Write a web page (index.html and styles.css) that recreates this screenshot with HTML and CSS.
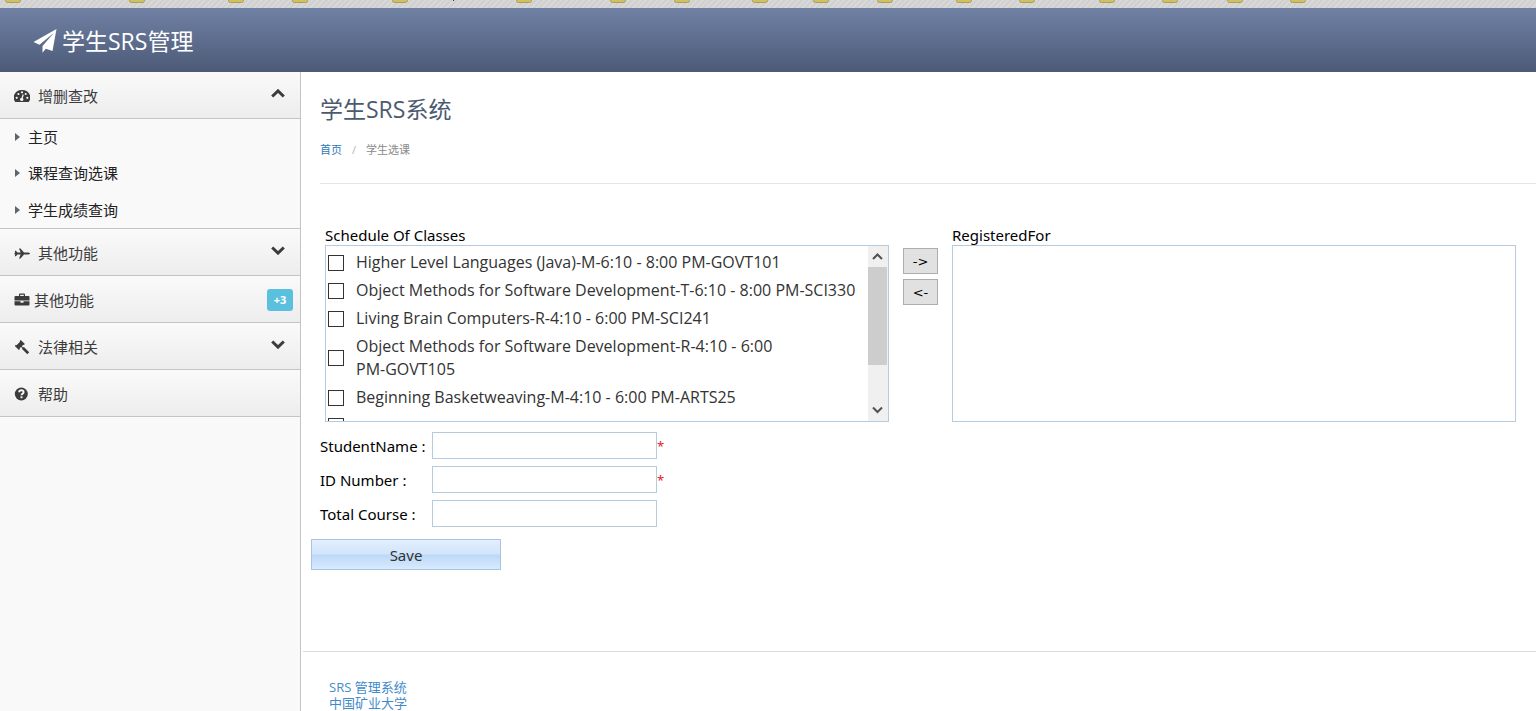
FILE: index.html
```html
<!DOCTYPE html>
<html lang="zh-CN">
<head>
<meta charset="utf-8">
<title>学生SRS管理</title>
<link rel="stylesheet" href="styles.css">
</head>
<body>
<div class="bookmarks" aria-hidden="true">
  <svg class="folders" width="1536" height="8"><g fill="#cfc068" stroke="#ad9f4c"><rect x="5.500" y="-9.500" width="15" height="12" rx="2"/><rect x="129.500" y="-9.500" width="15" height="12" rx="2"/><rect x="228.500" y="-9.500" width="15" height="12" rx="2"/><rect x="292.500" y="-9.500" width="15" height="12" rx="2"/><rect x="392.500" y="-9.500" width="15" height="12" rx="2"/><rect x="516.500" y="-9.500" width="15" height="12" rx="2"/><rect x="610.500" y="-9.500" width="15" height="12" rx="2"/><rect x="674.500" y="-9.500" width="15" height="12" rx="2"/><rect x="752.500" y="-9.500" width="15" height="12" rx="2"/><rect x="813.500" y="-9.500" width="15" height="12" rx="2"/><rect x="877.500" y="-9.500" width="15" height="12" rx="2"/><rect x="956.500" y="-9.500" width="15" height="12" rx="2"/><rect x="1019.500" y="-9.500" width="15" height="12" rx="2"/><rect x="1099.500" y="-9.500" width="15" height="12" rx="2"/><rect x="1162.500" y="-9.500" width="15" height="12" rx="2"/><rect x="1227.500" y="-9.500" width="15" height="12" rx="2"/><rect x="1290.500" y="-9.500" width="15" height="12" rx="2"/></g><rect x="453" y="0" width="1" height="1" fill="#333"/></svg>
</div>
<header class="topbar">
  <svg class="plane" width="24" height="24" viewBox="0 0 24 24" fill="#fff"><path d="M23.500 0 .5 13 6.500 15.800 21 3.800 9.500 17V23.800L12.800 19.700 19.500 22z"/></svg>
  <span class="brand">学生SRS管理</span>
</header>
<div class="layout">
  <nav class="sidebar">
    <a class="item" href="#manage">
      <svg class="icon" width="16" height="16" viewBox="0 0 16 16"><path fill="#3c3c3c" d="M8 2a8 7.500 0 0 0-6.700 12h13.400A8 7.500 0 0 0 8 2z"/><g fill="#f6f6f6"><circle cx="2.700" cy="9.800" r="1.100"/><circle cx="4.400" cy="6" r="1.100"/><circle cx="8" cy="4.300" r="1.100"/><circle cx="11.700" cy="6" r="1.100"/><circle cx="13.300" cy="9.800" r="1.100"/><circle cx="7.700" cy="11.400" r="1.700"/></g><path d="M7.900 11 9.200 6.500" stroke="#f6f6f6" stroke-width="1.200"/></svg>
      <span>增删查改</span>
      <svg class="chevron" width="14" height="9" viewBox="0 0 14 9"><path d="M1.200 7.500 7 1.900 12.800 7.500"/></svg>
    </a>
    <ul class="submenu">
      <li><a href="#home">主页</a></li>
      <li><a href="#courses">课程查询选课</a></li>
      <li><a href="#scores">学生成绩查询</a></li>
    </ul>
    <a class="item" href="#other">
      <svg class="icon" width="16" height="16" viewBox="0 0 16 16" fill="#3c3c3c"><path d="M16 8.500C16 9.300 14.500 9.500 13 9.500H10L6.500 13.500H5L6.700 9.500H3.400L2 11.200H.8L1.200 9.200H.5V7.800H1.200L.8 5.800H2L3.400 7.500H6.700L5 3.500H6.500L10 7.500H13C14.500 7.500 16 7.700 16 8.500z"/></svg>
      <span>其他功能</span>
      <svg class="chevron" width="14" height="9" viewBox="0 0 14 9"><path d="M1.200 1.500 7 7.100 12.800 1.500"/></svg>
    </a>
    <a class="item" href="#more">
      <svg class="icon icon-tight" width="16" height="16" viewBox="0 0 16 16" fill="#3c3c3c"><path d="M5 4V2.600Q5 1.500 6 1.500H10Q11 1.500 11 2.600V4H14.500Q15.500 4 15.500 5V8.500H.5V5Q.5 4 1.500 4zM6.200 4H9.800V2.800H6.200z"/><path d="M.5 9.300H6.500V10.700H9.500V9.300H15.500V12.500Q15.500 13.500 14.500 13.500H1.500Q.5 13.500.5 12.500z"/></svg>
      <span>其他功能</span>
      <span class="badge">+3</span>
    </a>
    <a class="item" href="#law">
      <svg class="icon" width="16" height="16" viewBox="0 0 16 16" fill="#3c3c3c"><path d="M6.800 1 10.900 5 9.800 6.100 9.300 5.800 7.800 7.300 9 8.500 9.900 8.100 15.200 13.200 13.300 15.200 8 10 8.300 9.200 7 8 5.600 9.300 6 9.900 4.900 11 .8 6.900 1.900 5.800 2.500 6.200 6 2.700 5.700 2.100z"/></svg>
      <span>法律相关</span>
      <svg class="chevron" width="14" height="9" viewBox="0 0 14 9"><path d="M1.200 1.500 7 7.100 12.800 1.500"/></svg>
    </a>
    <a class="item" href="#help">
      <svg class="icon" width="16" height="16" viewBox="0 0 16 16"><circle cx="7.300" cy="8" r="6.500" fill="#3c3c3c"/><path d="M5.100 6.300C5.300 3.600 9.600 3.700 9.600 6.200 9.600 7.700 7.500 7.600 7.500 9.300" fill="none" stroke="#f6f6f6" stroke-width="1.900"/><rect x="6.500" y="10.300" width="2" height="1.900" fill="#f6f6f6"/></svg>
      <span>帮助</span>
    </a>
  </nav>
  <main class="content">
    <div class="page-head">
      <h1>学生SRS系统</h1>
      <div class="crumbs"><a href="#home">首页</a><span class="slash">/</span><span>学生选课</span></div>
    </div>
    <form class="form">
      <div class="transfer">
        <section class="pane">
          <h2>Schedule Of Classes</h2>
          <div class="box">
            <div class="options">
              <label><input type="checkbox"><span>Higher Level Languages (Java)-M-6:10 - 8:00 PM-GOVT101</span></label>
              <label><input type="checkbox"><span>Object Methods for Software Development-T-6:10 - 8:00 PM-SCI330</span></label>
              <label><input type="checkbox"><span>Living Brain Computers-R-4:10 - 6:00 PM-SCI241</span></label>
              <label><input type="checkbox"><span>Object Methods for Software Development-R-4:10 - 6:00<br>PM-GOVT105</span></label>
              <label><input type="checkbox"><span>Beginning Basketweaving-M-4:10 - 6:00 PM-ARTS25</span></label>
              <label><input type="checkbox" aria-label="More classes"></label>
            </div>
            <div class="scrollbar" aria-hidden="true">
              <svg width="19" height="21" viewBox="0 0 19 21"><path d="M5 13 9.500 8.500 14 13"/></svg>
              <div class="track"><div class="thumb"></div></div>
              <svg width="19" height="21" viewBox="0 0 19 21"><path d="M5 7.500 9.500 12 14 7.500"/></svg>
            </div>
          </div>
        </section>
        <div class="moves">
          <button type="button">-&gt;</button>
          <button type="button">&lt;-</button>
        </div>
        <section class="pane">
          <h2>RegisteredFor</h2>
          <div class="box"></div>
        </section>
      </div>
      <div class="fields">
        <div class="field"><label for="name">StudentName :</label><input id="name" type="text"><span class="req">*</span></div>
        <div class="field"><label for="idno">ID Number :</label><input id="idno" type="text"><span class="req">*</span></div>
        <div class="field"><label for="total">Total Course :</label><input id="total" type="text"></div>
      </div>
      <button class="save" type="button">Save</button>
    </form>
    <footer class="footer">
      <a href="#srs">SRS 管理系统</a>
      <a href="#cumt">中国矿业大学</a>
    </footer>
  </main>
</div>
</body>
</html>
```
FILE: styles.css
```css
* { box-sizing: border-box; }
html, body { height: 100%; }
body {
  margin: 0;
  display: flex;
  flex-direction: column;
  overflow: hidden;
  background: #fff;
  color: #000;
  font-family: "Open Sans", "Noto Sans CJK SC", sans-serif;
  font-size: 16px;
}
a { text-decoration: none; color: inherit; }
.bookmarks {
  flex: none;
  height: 8px;
  overflow: hidden;
  background: repeating-linear-gradient(135deg, #d8d8d8 0 2px, #d0d0d0 2px 4px);
}
.folders { display: block; }
.topbar {
  flex: none;
  height: 64px;
  display: flex;
  align-items: center;
  gap: 5px;
  padding: 2px 33px 0 33px;
  background: linear-gradient(#7081a4, #4c5a77);
  color: #fff;
}
.brand {
  font-size: 23px;
  line-height: 30px;
  font-weight: 400;
}
.layout { flex: 1; display: flex; min-height: 0; }
.sidebar {
  flex: none;
  width: 301px;
  background: #f9f9f9;
  border-right: 1px solid #c4c4c4;
  font-size: 15px;
}
.item {
  display: flex;
  align-items: center;
  height: 47px;
  padding: 1px 7px 0 14px;
  border-bottom: 1px solid #c4c4c4;
  background: linear-gradient(#fafafa, #ededed);
  color: #3c3c3c;
  line-height: 22px;
}
.icon { flex: none; margin-right: 8px; }
.icon-tight { margin-right: 4px; }
.chevron {
  margin: 0 8px 5px auto;
  fill: none;
  stroke: #3c3c3c;
  stroke-width: 3;
}
.badge {
  margin-left: auto;
  width: 26px;
  height: 22px;
  border-radius: 3px;
  background: #5bc0de;
  color: #fff;
  font-size: 11px;
  font-weight: 700;
  text-align: center;
}
.submenu {
  list-style: none;
  margin: 0;
  padding: 0 0 0 15px;
  border-bottom: 1px solid #c4c4c4;
  color: #222;
}
.submenu a { display: flex; align-items: center; gap: 8px; height: 36px; line-height: 22px; }
.submenu li:last-child a { height: 37px; }
.submenu a::before {
  content: "";
  border: 4px solid transparent;
  border-left: 5px solid #5c6670;
  border-right: 0;
}
.content { flex: 1; min-width: 0; display: flex; flex-direction: column; }
.page-head {
  margin-left: 19px;
  padding: 22px 0 25px;
  border-bottom: 1px solid #e6e6e6;
}
h1 {
  margin: 0 0 17px;
  font-size: 23px;
  line-height: 30px;
  font-weight: 400;
  color: #4c5a70;
}
.crumbs {
  display: flex;
  gap: 10px;
  font-size: 11px;
  line-height: 17px;
  color: #8a8a8a;
}
.crumbs a { color: #337ab7; }
.slash { color: #b5b5b5; }
.form { padding: 41px 20px 0 10px; }
.transfer { display: flex; gap: 14px; margin-left: 14px; }
.pane { flex: 1; min-width: 0; }
h2 {
  margin: 0;
  font-family: "Noto Sans", sans-serif;
  font-size: 15px;
  line-height: 20px;
  font-weight: 400;
}
.box {
  display: flex;
  height: 177px;
  border: 1px solid #b5cbe0;
  overflow: hidden;
}
.options {
  flex: 1;
  display: flex;
  flex-direction: column;
  gap: 5px;
  padding: 5px 0 0 2px;
  overflow: hidden;
  color: #333;
  line-height: 23px;
}
.options label { flex: none; display: flex; align-items: center; gap: 12px; min-height: 23px; }
.options input {
  appearance: none;
  width: 16px;
  height: 16px;
  margin: 0;
  border: 1px solid #333;
  background: #fff;
}
.scrollbar {
  width: 20px;
  padding-right: 1px;
  display: flex;
  flex-direction: column;
  background: #f0f0f0;
}
.scrollbar path { fill: none; stroke: #505050; stroke-width: 2; }
.track { flex: 1; }
.thumb { height: 74%; background: #cdcdcd; }
.moves {
  display: flex;
  flex-direction: column;
  gap: 5px;
  padding-top: 23px;
}
.moves button {
  width: 35px;
  height: 26px;
  padding: 0;
  border: 1px solid #adadad;
  background: #e1e1e1;
  font: 13px "DejaVu Sans", sans-serif;
}
.fields {
  display: flex;
  flex-direction: column;
  gap: 7px;
  margin: 10px 0 0 9px;
  font-family: "Noto Sans", sans-serif;
  font-size: 15px;
}
.field { display: flex; align-items: center; line-height: 22px; }
.field label { width: 112px; }
.field input {
  width: 225px;
  height: 27px;
  padding: 0 4px;
  border: 1px solid #b5cbe0;
  font: inherit;
}
.req { color: #e8202a; font-size: 13px; }
.save {
  display: block;
  width: 190px;
  height: 31px;
  margin-top: 12px;
  padding: 0;
  border: 1px solid #a9c4e0;
  background: linear-gradient(#e2effd 0, #d2e5fb 48%, #bcd9f8 52%, #d8eaff 100%);
  color: #333;
  font: 15px "Noto Sans", sans-serif;
}
.footer {
  margin: 81px 0 0 2px;
  padding: 27px 26px 0;
  border-top: 1px solid #dcdcdc;
  display: flex;
  flex-direction: column;
  align-items: flex-start;
  color: #428bca;
  font-size: 13px;
  line-height: 16px;
}
```
